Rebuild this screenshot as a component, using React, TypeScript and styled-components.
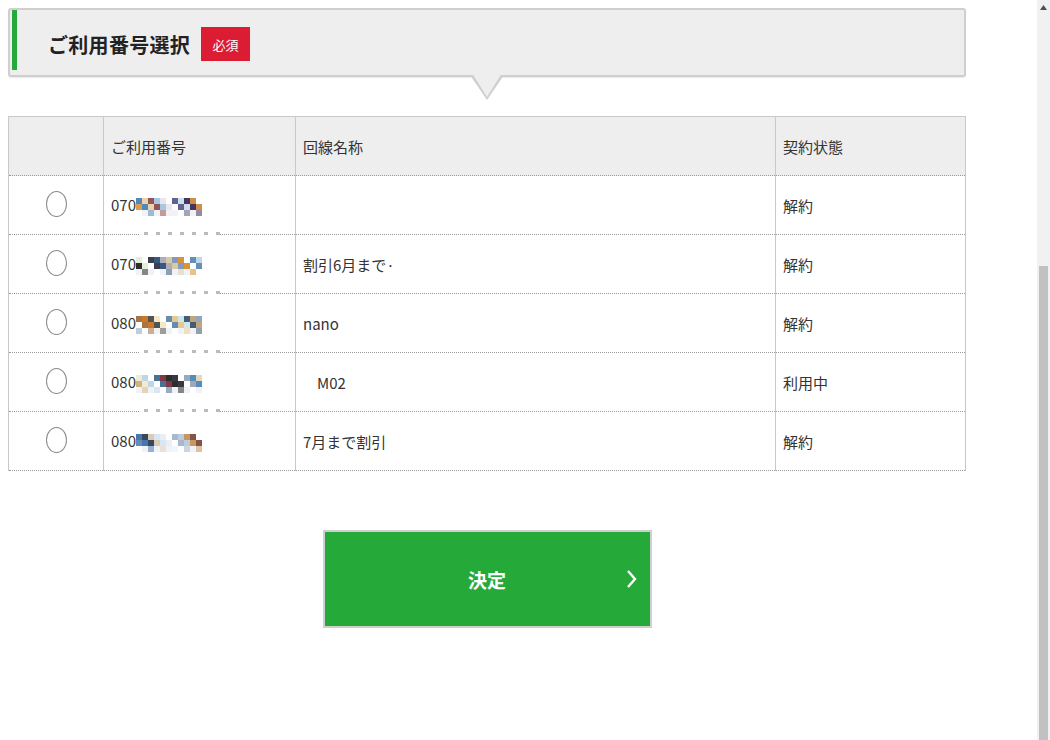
import React from "react";
import styled, { createGlobalStyle } from "styled-components";

const GlobalStyle = createGlobalStyle`
  html, body {
    margin: 0;
    padding: 0;
    background: #fff;
    font-family: "Noto Sans CJK JP", "Noto Sans", sans-serif;
    color: #333;
  }
`;

const SPage = styled.div`
  display: flex;
  width: 1050px;
  height: 740px;
  overflow: hidden;
`;

const SMain = styled.div`
  flex: 1;
  padding: 8px;
`;

const SContent = styled.div`
  width: 958px;
`;

const SHeading = styled.div`
  position: relative;
  box-sizing: border-box;
  height: 69px;
  background: #eee;
  border: 2px solid #cfcfcf;
  border-radius: 3px;
  padding: 0 0 5px 2px;
  box-shadow: 0 1px 1px rgba(0, 0, 0, 0.08);

  &::before,
  &::after {
    content: "";
    position: absolute;
    left: 50%;
    width: 0;
    height: 0;
    border-style: solid;
    border-color: transparent;
  }
  &::before {
    top: 100%;
    margin-left: -17px;
    border-width: 25px 17px 0 17px;
    border-top-color: #cfcfcf;
  }
  &::after {
    top: 100%;
    margin-top: -2px;
    margin-left: -15px;
    border-width: 24px 15px 0 15px;
    border-top-color: #eee;
  }
`;

const STitleRow = styled.div`
  display: flex;
  align-items: center;
  box-sizing: border-box;
  height: 100%;
  border-left: 5px solid #27a83a;
  padding: 8px 0 0 31px;
  gap: 11px;
`;

const STitle = styled.h2`
  margin: 0;
  font-size: 20px;
  font-weight: 700;
  color: #222;
  letter-spacing: 0.3px;
`;

const SBadge = styled.span`
  display: flex;
  align-items: center;
  justify-content: center;
  width: 49px;
  height: 34px;
  background: #dc1c33;
  color: #fff;
  font-size: 13px;
`;

const STable = styled.table`
  margin-top: 39px;
  width: 958px;
  border-collapse: collapse;
  table-layout: fixed;
  font-size: 15px;
  border-top: 1px solid #c8c8c8;
  border-left: 1px solid #c8c8c8;
  border-right: 1px solid #c8c8c8;
`;

const SHeadCell = styled.th<{ $w?: number }>`
  ${(p) => (p.$w ? `width: ${p.$w}px;` : "")}
  height: 58px;
  background: #eee;
  text-align: left;
  font-weight: 400;
  padding: 0 7px;
  border-left: 1px solid #c8c8c8;
  border-bottom: 1px dotted #999;
  color: #333;
`;

const SCell = styled.td<{ $center?: boolean }>`
  position: relative;
  height: 58px;
  padding: 0 7px;
  border-left: 1px solid #c8c8c8;
  border-bottom: 1px dotted #999;
  text-align: ${(p) => (p.$center ? "center" : "left")};
  vertical-align: middle;
  color: #333;
`;

const SRadio = styled.span`
  display: inline-block;
  width: 19px;
  height: 24px;
  border: 1.5px solid #8a8a8a;
  border-radius: 50%;
  vertical-align: middle;
  margin-top: -4px;
`;

const SNumber = styled.span`
  display: inline-flex;
  align-items: center;
  margin-top: -2px;
`;

const SDotRow = styled.svg`
  position: absolute;
  left: 36px;
  bottom: -2px;
`;

const SNameShift = styled.span<{ $indent: number }>`
  padding-left: ${(p) => p.$indent}px;
`;

const SActions = styled.div`
  display: flex;
  justify-content: center;
  margin-top: 59px;
`;

const SButton = styled.button`
  position: relative;
  box-sizing: border-box;
  width: 329px;
  height: 98px;
  background: #25aa3a;
  border: 2px solid #cfcfcf;
  color: #fff;
  font-family: inherit;
  font-size: 19px;
  font-weight: 700;
  cursor: pointer;
`;

const SChevron = styled.svg`
  position: absolute;
  right: 12px;
  top: 50%;
  margin-top: -10px;
`;

const SScrollbar = styled.div`
  display: flex;
  flex-direction: column;
  width: 13px;
  background: #f1f1f1;
`;

const SScrollArrow = styled.div`
  display: flex;
  justify-content: center;
  padding-top: 5px;
  height: 266px;
  box-sizing: border-box;
`;

const SScrollThumb = styled.div`
  flex: 1;
  margin: 0 2px;
  background: #c1c1c1;
`;

const palettes: string[][] = [
  ["#4a7fb5", "#c9ddee", "#8c4b4b", "#c88a3c", "#e9e4ee", "#d49a4a", "#5a5a8a", "#e8d0a8", "#3e2a55", "#9fc7dd"],
  ["#2d4f7a", "#b8d8ea", "#d7c7a0", "#e5ecd5", "#d58f30", "#334", "#5b8ab0", "#a9a9b7", "#222", "#7d93b8"],
  ["#e2c88a", "#c4721d", "#38546e", "#f2e8c6", "#8aa2bb", "#5e86b0", "#a46b3a", "#cde3f0", "#4a4a4a", "#c0a075"],
  ["#4b87b8", "#7a2c3c", "#c9b07f", "#2e2e38", "#bcd4e6", "#9aa3b2", "#3e6a8f", "#e5d4ba", "#222", "#f1ead2"],
  ["#3f6fa8", "#b6c9e0", "#d8c9b0", "#7d4a3a", "#e7eef6", "#5b86b8", "#a2b5c8", "#2e3d55", "#c4905a", "#d6e6f2"],
];

const Mosaic = ({ seed }: { seed: number }) => {
  const pal = palettes[seed % palettes.length];
  const cells: React.ReactNode[] = [];
  const cols = 11;
  for (let r = 0; r < 3; r++) {
    for (let c = 0; c < cols; c++) {
      const k = (c * 7 + r * 5 + seed * 3) % 12;
      if (k > 9) continue;
      const color = r === 2 ? (k % 2 ? "#e3e8ef" : pal[k]) : pal[k];
      cells.push(<rect key={`${r}-${c}`} x={c * 6} y={r * 6} width={6} height={6} fill={color} opacity={r === 2 ? 0.55 : 0.95} />);
    }
  }
  return (
    <svg width={cols * 6} height={18} viewBox={`0 0 ${cols * 6} 18`} style={{ marginLeft: 0, marginTop: 4 }}>
      {cells}
    </svg>
  );
};

const DotRow = () => (
  <SDotRow width={80} height={5} viewBox="0 0 80 5">
    <rect x={0} y={0} width={80} height={5} fill="#fff" />
    {[0, 1, 2, 3, 4, 5, 6].map((i) => (
      <rect key={i} x={4 + i * 12} y={1} width={4} height={3} fill="#bbb" />
    ))}
  </SDotRow>
);

interface ILine {
  prefix: string;
  name: string;
  status: string;
  indent?: number;
}

const lines: ILine[] = [
  { prefix: "070", name: "", status: "解約" },
  { prefix: "070", name: "割引6月まで·", status: "解約" },
  { prefix: "080", name: "nano", status: "解約" },
  { prefix: "080", name: "M02", status: "利用中", indent: 14 },
  { prefix: "080", name: "7月まで割引", status: "解約" },
];

const App = () => (
  <>
    <GlobalStyle />
    <SPage>
      <SMain>
        <SContent>
          <SHeading>
            <STitleRow>
              <STitle>ご利用番号選択</STitle>
              <SBadge>必須</SBadge>
            </STitleRow>
          </SHeading>
          <STable>
            <thead>
              <tr>
                <SHeadCell $w={80} />
                <SHeadCell $w={177}>ご利用番号</SHeadCell>
                <SHeadCell $w={465}>回線名称</SHeadCell>
                <SHeadCell>契約状態</SHeadCell>
              </tr>
            </thead>
            <tbody>
              {lines.map((line, i) => (
                <tr key={i}>
                  <SCell $center>
                    <SRadio />
                  </SCell>
                  <SCell>
                    <SNumber>
                      {line.prefix}
                      <Mosaic seed={i} />
                    </SNumber>
                    {i < lines.length - 1 && <DotRow />}
                  </SCell>
                  <SCell>
                    <SNameShift $indent={line.indent ?? 0}>{line.name}</SNameShift>
                  </SCell>
                  <SCell>{line.status}</SCell>
                </tr>
              ))}
            </tbody>
          </STable>
          <SActions>
            <SButton type="button">
              決定
              <SChevron width={12} height={20} viewBox="0 0 12 20">
                <path d="M2 2 L9 10 L2 18" fill="none" stroke="#fff" strokeWidth={2.4} />
              </SChevron>
            </SButton>
          </SActions>
        </SContent>
      </SMain>
      <SScrollbar>
        <SScrollArrow>
          <svg width={7} height={5} viewBox="0 0 7 5">
            <path d="M0 5 L3.5 0 L7 5 Z" fill="#505050" />
          </svg>
        </SScrollArrow>
        <SScrollThumb />
      </SScrollbar>
    </SPage>
  </>
);

export default App;
